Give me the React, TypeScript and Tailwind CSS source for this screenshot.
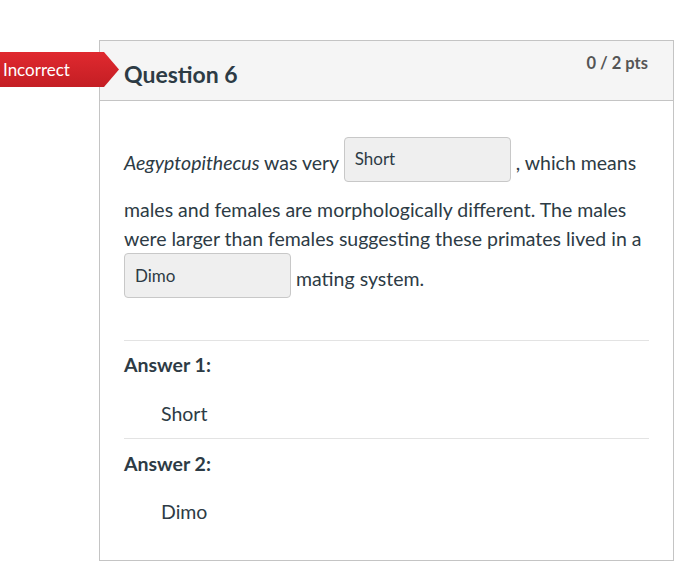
export default function App() {
  return (
    <div className="min-h-[582px] w-[700px] bg-white pt-[40px] font-['Lato','Liberation_Sans',sans-serif] text-[#2d3b45]">
      <div className="relative ml-[99px] w-[575px] h-[521px] border border-[#c4c4c4]">
        {/* Incorrect badge */}
        <div className="absolute left-[-100px] top-[11px] flex h-[35px] w-[119px] items-center bg-gradient-to-b from-[#e0292f] to-[#c41e24] pl-[3px] text-[17px] text-white [clip-path:polygon(0_0,104px_0,119px_50%,104px_100%,0_100%)]">
          Incorrect
        </div>

        {/* Header */}
        <div className="flex h-[60px] items-start justify-between border-b border-[#c4c4c4] bg-[#f5f5f5] pl-[24px] pr-[25px]">
          <h2 className="mt-[18px] text-[23px] font-bold leading-[30px]">Question 6</h2>
          <div className="mt-[11px] text-[16.5px] font-bold leading-[22px] text-[#555]">0 / 2 pts</div>
        </div>

        {/* Body */}
        <div className="px-[24px] pt-[36px]">
          <p className="w-[524px] text-[19.5px] leading-[29px]">
            <i>Aegyptopithecus</i> was very{" "}
            <span className="inline-block h-[45px] w-[167px] rounded-[4px] border border-[#c8c8c8] bg-[#efefef] px-[10px] pt-[10px] align-[5px] text-[17px] leading-[22px]">
              Short
            </span>{" "}
            , which means
            <span className="block h-[13px]" />
            males and females are morphologically different. The males were larger than females suggesting these primates lived in a{" "}
            <span className="inline-block h-[45px] w-[167px] rounded-[4px] border border-[#c8c8c8] bg-[#efefef] px-[10px] pt-[11px] align-[4px] text-[17px] leading-[22px]">
              Dimo
            </span>{" "}
            mating system.
          </p>

          <div className="mt-[42px] border-t border-[#e3e3e3]">
            <div className="pt-[11px] text-[19.5px] font-bold leading-[26px]">Answer 1:</div>
            <div className="pl-[37px] pt-[23px] pb-[11px] text-[19.5px] leading-[26px]">Short</div>
          </div>
          <div className="border-t border-[#e3e3e3]">
            <div className="pt-[12px] text-[19.5px] font-bold leading-[26px]">Answer 2:</div>
            <div className="pl-[37px] pt-[22px] text-[19.5px] leading-[26px]">Dimo</div>
          </div>
        </div>
      </div>
    </div>
  );
}
